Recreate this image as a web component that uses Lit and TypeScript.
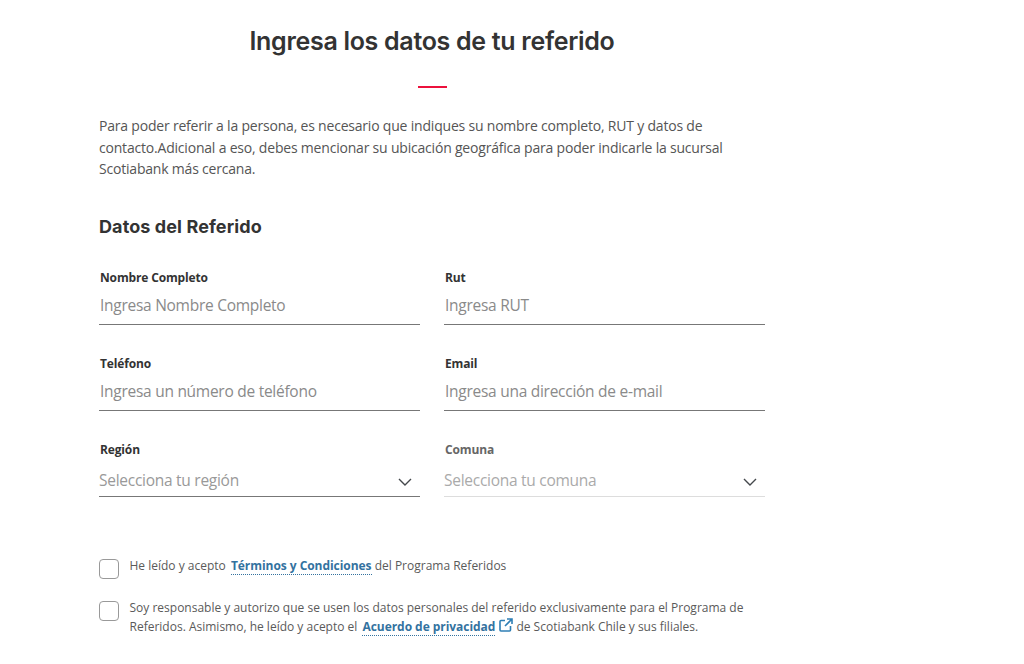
import { LitElement, html, css } from "lit";
import { customElement } from "lit/decorators.js";

const chevron = html`<svg class="chev" width="14" height="8" viewBox="0 0 14 8" fill="none" stroke="#44484c" stroke-width="1.4"><path d="M1 1l6 6 6-6"/></svg>`;

@customElement("app-root")
export class AppRoot extends LitElement {
  static styles = css`
    :host { display: block; width: 1024px; height: 664px; overflow: hidden; background: #fff; font-family: "Open Sans", sans-serif; color: #333; }
    .page { width: 666px; margin-left: 99px; padding-top: 26px; }
    h1 { margin: 0; font: 600 25px/30px Inter, sans-serif; letter-spacing: -0.3px; color: #333; text-align: center; width: 666px; }
    .rule { width: 29px; height: 2px; background: #ec113c; margin: 29.5px 0 0 318.5px; }
    .intro { margin: 27.5px 0 0; font-size: 14px; line-height: 21.5px; color: #555; letter-spacing: -0.2px; width: 640px; }
    h2 { margin: 35px 0 0; font: 700 18px/24px Inter, sans-serif; letter-spacing: 0.1px; color: #333; }
    .grid { display: grid; grid-template-columns: 321px 321px; column-gap: 24px; margin-top: 31px; row-gap: 31.25px; }
    .field { height: 54px; display: flex; flex-direction: column; border-bottom: 1px solid #777; }
    .label { font-size: 12px; font-weight: 700; line-height: 16px; color: #333; padding-left: 1px; letter-spacing: -0.15px; }
    .label.dim { color: #666; }
    .value { font-size: 15.5px; line-height: 24px; color: #8a8a8a; margin-top: 7px; padding-left: 1px; letter-spacing: -0.27px; }
    .select .value { display: flex; justify-content: space-between; align-items: center; padding-left: 0; margin-top: 10px; color: #999; }
    .chev { margin-right: 8px; margin-top: 4px; }
    .field.light { border-bottom-color: #ddd; }
    .field.light .value { color: #aaa; }
    .checks { margin-top: 59px; display: flex; flex-direction: column; gap: 19px; }
    .check { display: flex; gap: 10.5px; font-size: 12px; line-height: 19px; color: #5a5a5a; }
    .box { width: 20px; height: 20px; box-sizing: border-box; border: 1.5px solid #999; border-radius: 4px; flex: none; margin-top: 3px; }
    a { color: #33729f; font-weight: 700; border-bottom: 1px dotted #33729f; text-decoration: none; margin: 0 0 0 2px; letter-spacing: -0.05px; }
    .ext { vertical-align: -1px; margin: 0 0 0 4px; }
  `;

  field(label: string, value: string) {
    return html`<div class="field"><div class="label">${label}</div><div class="value">${value}</div></div>`;
  }

  render() {
    return html`<div class="page">
      <h1>Ingresa los datos de tu referido</h1>
      <div class="rule"></div>
      <p class="intro">Para poder referir a la persona, es necesario que indiques su nombre completo, RUT y datos de contacto.Adicional a eso, debes mencionar su ubicación geográfica para poder indicarle la sucursal Scotiabank más cercana.</p>
      <h2>Datos del Referido</h2>
      <div class="grid">
        ${this.field("Nombre Completo", "Ingresa Nombre Completo")}
        ${this.field("Rut", "Ingresa RUT")}
        ${this.field("Teléfono", "Ingresa un número de teléfono")}
        ${this.field("Email", "Ingresa una dirección de e-mail")}
        <div class="field select"><div class="label">Región</div><div class="value">Selecciona tu región ${chevron}</div></div>
        <div class="field select light"><div class="label dim">Comuna</div><div class="value">Selecciona tu comuna ${chevron}</div></div>
      </div>
      <div class="checks">
        <div class="check"><span class="box"></span><span>He leído y acepto <a>Términos y Condiciones</a> del Programa Referidos</span></div>
        <div class="check"><span class="box"></span><span>Soy responsable y autorizo que se usen los datos personales del referido exclusivamente para el Programa de Referidos. Asimismo, he leído y acepto el <a>Acuerdo de privacidad</a><svg class="ext" width="14" height="14" viewBox="0 0 14 14" fill="none" stroke="#2f7fb5" stroke-width="1.6"><path d="M6 2.5H2a1 1 0 0 0-1 1V12a1 1 0 0 0 1 1h8.5a1 1 0 0 0 1-1V8M8 1h5v5M13 1L6 8"/></svg> de Scotiabank Chile y sus filiales.</span></div>
      </div>
    </div>`;
  }
}
